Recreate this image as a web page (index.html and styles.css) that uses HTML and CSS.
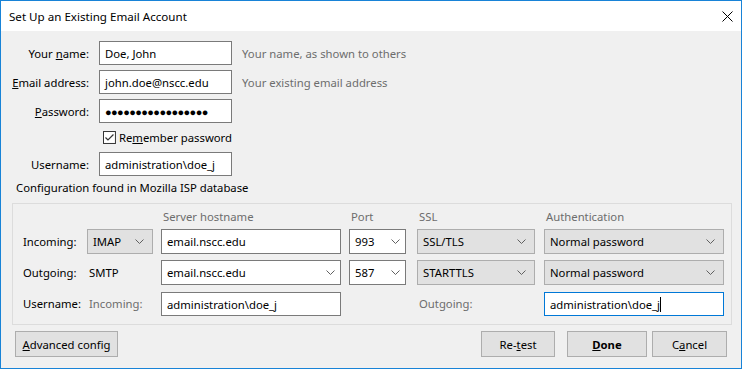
FILE: index.html
```html
<!DOCTYPE html>
<html lang="en">
<head>
  <meta charset="UTF-8" />
  <title>Set Up an Existing Email Account</title>
  <link rel="stylesheet" href="styles.css">
</head>
<body>
  <div class="window">
    <div class="titlebar">
      <span class="title">Set Up an Existing Email Account</span>
      <svg class="close" width="11" height="11" viewBox="0 0 11 11"><path d="M0.5 0.5L10.5 10.5M10.5 0.5L0.5 10.5" stroke="#000" stroke-width="1" fill="none"/></svg>
    </div>

    <div class="content">
      <div class="account">
        <span class="label">Your <u>n</u>ame:</span>
        <div class="field">Doe, John</div>
        <span class="hint">Your name, as shown to others</span>

        <span class="label"><u>E</u>mail address:</span>
        <div class="field">john.doe@nscc.edu</div>
        <span class="hint">Your existing email address</span>

        <span class="label"><u>P</u>assword:</span>
        <div class="field dots">●●●●●●●●●●●●●●●●●</div>
        <span></span>

        <span></span>
        <div class="check">
          <svg class="box" width="13" height="13" viewBox="0 0 13 13"><rect x="0.5" y="0.5" width="12" height="12" fill="#fff" stroke="#333"/><path d="M2.5 6.5L5 9L10.5 3.5" stroke="#333" stroke-width="1.2" fill="none"/></svg>
          <span>Re<u>m</u>ember password</span>
        </div>
        <span></span>

        <span class="label">Username:</span>
        <div class="field">administration\doe_j</div>
        <span></span>
      </div>

      <p class="status">Configuration found in Mozilla ISP database</p>

      <div class="group">
        <div class="server">
          <span></span>
          <span></span>
          <span class="head">Server hostname</span>
          <span class="head">Port</span>
          <span class="head">SSL</span>
          <span class="head">Authentication</span>

          <span class="label-left">Incoming:</span>
          <div class="select w66">IMAP<svg class="chev" width="9" height="5" viewBox="0 0 9 5"><polyline points="0.5,0.5 4.5,4.5 8.5,0.5" stroke="#606060" fill="none"/></svg></div>
          <div class="field w180">email.nscc.edu</div>
          <div class="field combo w57">993<svg class="chev" width="9" height="5" viewBox="0 0 9 5"><polyline points="0.5,0.5 4.5,4.5 8.5,0.5" stroke="#606060" fill="none"/></svg></div>
          <div class="select w118">SSL/TLS<svg class="chev" width="9" height="5" viewBox="0 0 9 5"><polyline points="0.5,0.5 4.5,4.5 8.5,0.5" stroke="#606060" fill="none"/></svg></div>
          <div class="select w180">Normal password<svg class="chev" width="9" height="5" viewBox="0 0 9 5"><polyline points="0.5,0.5 4.5,4.5 8.5,0.5" stroke="#606060" fill="none"/></svg></div>

          <span class="label-left">Outgoing:</span>
          <span class="plain">SMTP</span>
          <div class="field combo w180">email.nscc.edu<svg class="chev" width="9" height="5" viewBox="0 0 9 5"><polyline points="0.5,0.5 4.5,4.5 8.5,0.5" stroke="#606060" fill="none"/></svg></div>
          <div class="field combo w57">587<svg class="chev" width="9" height="5" viewBox="0 0 9 5"><polyline points="0.5,0.5 4.5,4.5 8.5,0.5" stroke="#606060" fill="none"/></svg></div>
          <div class="select w118">STARTTLS<svg class="chev" width="9" height="5" viewBox="0 0 9 5"><polyline points="0.5,0.5 4.5,4.5 8.5,0.5" stroke="#606060" fill="none"/></svg></div>
          <div class="select w180">Normal password<svg class="chev" width="9" height="5" viewBox="0 0 9 5"><polyline points="0.5,0.5 4.5,4.5 8.5,0.5" stroke="#606060" fill="none"/></svg></div>

          <span class="label-left">Username:</span>
          <span class="plain muted">Incoming:</span>
          <div class="field w180">administration\doe_j</div>
          <span></span>
          <span class="plain muted">Outgoing:</span>
          <div class="field focus w180"><span>administration\doe_j</span><span class="caret"></span></div>
        </div>
      </div>

      <div class="buttons">
        <button class="btn advanced"><u>A</u>dvanced config</button>
        <span class="spacer"></span>
        <button class="btn retest">Re-<u>t</u>est</button>
        <button class="btn done"><b><u>D</u>one</b></button>
        <button class="btn cancel">C<u>a</u>ncel</button>
      </div>
    </div>
  </div>
</body>
</html>
```

FILE: styles.css
```css
body {
  margin: 0;
  background: #fff;
}
.window {
  width: 742px;
  height: 369px;
  box-sizing: border-box;
  border: 1px solid #1883d7;
  background: #f0f0f0;
  display: flex;
  flex-direction: column;
  font-family: "Noto Sans", sans-serif;
  font-size: 11.3px;
  color: #000;
  white-space: nowrap;
}
.titlebar {
  height: 30px;
  flex: none;
  background: #fff;
  display: flex;
  align-items: center;
  justify-content: space-between;
  padding: 0 8px 0 8px;
}
.title {
  font-size: 11.6px;
}
.content {
  padding: 10px 9px 0 11px;
}
.account {
  display: grid;
  grid-template-columns: 77px 133px auto;
  grid-template-rows: 24px 24px 24px 19px 24px;
  column-gap: 10px;
  row-gap: 5px;
  align-items: center;
}
.label {
  text-align: right;
}
.hint {
  color: #6d6d6d;
}
.field {
  height: 24px;
  box-sizing: border-box;
  border: 1px solid #7a7a7a;
  background: #fff;
  padding: 0 5px;
  display: flex;
  align-items: center;
}
.dots {
  font-size: 11px;
  letter-spacing: -0.6px;
}
.check {
  display: flex;
  align-items: center;
  gap: 3px;
  padding-left: 4px;
}
.status {
  margin: 4px 0 7px 4px;
  line-height: 16px;
}
.group {
  border: 1px solid #dcdcdc;
  padding: 5px 8px 8px 10px;
}
.server {
  display: grid;
  grid-template-columns: 64px 74px 188px 68px 127px 180px;
  grid-template-rows: 20px 31px 32px 24px;
  align-items: start;
}
.server .field,
.server .select {
  height: 25px;
}
.server > :nth-last-child(-n+6) {
  height: 24px;
}
.head {
  color: #6d6d6d;
  line-height: 16px;
  padding-left: 2px;
}
.label-left,
.plain {
  line-height: 25px;
}
.server > :nth-last-child(-n+6).plain,
.server > :nth-last-child(-n+6).label-left {
  line-height: 24px;
}
.plain {
  padding-left: 2px;
}
.muted {
  color: #6d6d6d;
}
.select {
  box-sizing: border-box;
  border: 1px solid #adadad;
  background: #e1e1e1;
  padding: 0 8px 0 5px;
  display: flex;
  align-items: center;
  justify-content: space-between;
}
.combo {
  justify-content: space-between;
  padding-right: 5px;
}
.w57 { width: 57px; }
.w66 { width: 66px; }
.w118 { width: 118px; }
.w180 { width: 180px; }
.focus {
  border-color: #0078d7;
}
.caret {
  width: 1px;
  height: 15px;
  background: #000;
}
.buttons {
  display: flex;
  margin-top: 6px;
  padding: 0 5px 0 3px;
}
.spacer {
  flex: 1;
}
.btn {
  height: 26px;
  border: 1px solid #adadad;
  background: #e1e1e1;
  font-family: inherit;
  font-size: 11.3px;
  color: #000;
  padding: 0;
}
.advanced { width: 103px; }
.retest { width: 74px; }
.done { width: 80px; margin-left: 12px; }
.cancel { width: 75px; margin-left: 5px; }
```
